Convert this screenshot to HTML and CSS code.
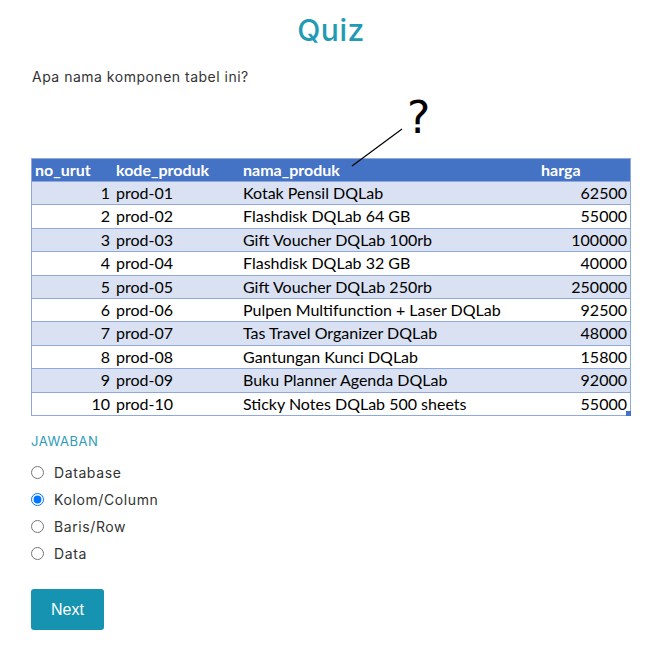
FILE: index.html
```html
<!DOCTYPE html>
<html>
<head>
<meta charset="utf-8">
<link rel="stylesheet" href="styles.css">
</head>
<body>
<div class="page">
  <h1 class="title">Quiz</h1>
  <p class="question">Apa nama komponen tabel ini?</p>
  <div class="figure">
    <div class="annot">
      <span class="qmark">?</span>
      <svg class="pointer" width="600" height="80" viewBox="0 0 600 80">
        <line x1="321" y1="72" x2="371" y2="35" stroke="#000" stroke-width="1.2"/>
      </svg>
    </div>
    <table class="data">
      <thead>
        <tr><th class="c1">no_urut</th><th class="c2">kode_produk</th><th class="c3">nama_produk</th><th class="c4">harga</th></tr>
      </thead>
      <tbody>
        <tr class="band"><td class="c1">1</td><td class="c2">prod-01</td><td class="c3">Kotak Pensil DQLab</td><td class="c4">62500</td></tr>
        <tr><td class="c1">2</td><td class="c2">prod-02</td><td class="c3">Flashdisk DQLab 64 GB</td><td class="c4">55000</td></tr>
        <tr class="band"><td class="c1">3</td><td class="c2">prod-03</td><td class="c3">Gift Voucher DQLab 100rb</td><td class="c4">100000</td></tr>
        <tr><td class="c1">4</td><td class="c2">prod-04</td><td class="c3">Flashdisk DQLab 32 GB</td><td class="c4">40000</td></tr>
        <tr class="band"><td class="c1">5</td><td class="c2">prod-05</td><td class="c3">Gift Voucher DQLab 250rb</td><td class="c4">250000</td></tr>
        <tr><td class="c1">6</td><td class="c2">prod-06</td><td class="c3">Pulpen Multifunction + Laser DQLab</td><td class="c4">92500</td></tr>
        <tr class="band"><td class="c1">7</td><td class="c2">prod-07</td><td class="c3">Tas Travel Organizer DQLab</td><td class="c4">48000</td></tr>
        <tr><td class="c1">8</td><td class="c2">prod-08</td><td class="c3">Gantungan Kunci DQLab</td><td class="c4">15800</td></tr>
        <tr class="band"><td class="c1">9</td><td class="c2">prod-09</td><td class="c3">Buku Planner Agenda DQLab</td><td class="c4">92000</td></tr>
        <tr><td class="c1">10</td><td class="c2">prod-10</td><td class="c3">Sticky Notes DQLab 500 sheets</td><td class="c4">55000<span class="handle"></span></td></tr>
      </tbody>
    </table>
  </div>
  <div class="answers">
    <div class="label">JAWABAN</div>
    <label class="opt"><input type="radio" name="a"><span>Database</span></label>
    <label class="opt"><input type="radio" name="a" checked><span>Kolom/Column</span></label>
    <label class="opt"><input type="radio" name="a"><span>Baris/Row</span></label>
    <label class="opt"><input type="radio" name="a"><span>Data</span></label>
  </div>
  <button class="next">Next</button>
</div>
</body>
</html>
```
FILE: styles.css
```css
html, body {
  margin: 0;
  padding: 0;
  background: #fff;
}
body {
  font-family: Inter, "Open Sans", sans-serif;
  color: #333;
}
.page {
  padding: 0 41px 0 31px;
}
.title {
  margin: 0;
  padding-top: 10px;
  text-align: center;
  font-size: 30px;
  font-weight: 500;
  letter-spacing: 0.5px;
  color: #1f9bb3;
  line-height: 40px;
}
.question {
  margin: 18px 0 0 1px;
  font-size: 14px;
  letter-spacing: 0.5px;
  line-height: 18px;
  color: #333;
}
.figure {
  position: relative;
  margin-top: 8px;
}
.annot {
  height: 64px;
}
.qmark {
  position: absolute;
  left: 376px;
  top: -4px;
  font-family: "DejaVu Sans", sans-serif;
  font-size: 44px;
  line-height: 56px;
  color: #000;
}
.pointer {
  position: absolute;
  left: 0;
  top: 0;
  z-index: 2;
}
.data {
  width: 600px;
  border-collapse: collapse;
  font-family: Lato, "Open Sans", sans-serif;
  font-size: 16px;
  color: #000;
  border: 1px solid #8ea9db;
}
.data th, .data td {
  padding: 0 3px 0 3px;
  white-space: nowrap;
}
.data th {
  height: 22px;
  line-height: 22px;
  background: #4472c4;
  color: #fff;
  font-weight: 700;
  text-align: left;
}
.data td {
  height: 22.4px;
  line-height: 22.4px;
  border-top: 1px solid #8ea9db;
}
.data tr.band td {
  background: #d9e1f2;
}
.data .c1 { width: 75px; }
.data .c2 { width: 119px; padding-left: 3px; }
.data .c3 { width: 292px; padding-left: 5px; }
.data .c4 { text-align: right; }
.data th.c1, .data th.c4 { text-align: left; }
.data td.c1 { text-align: right; }
.data td.c4 { position: relative; }
.handle {
  position: absolute;
  right: -1px;
  bottom: -1px;
  width: 5px;
  height: 5px;
  background: #4472c4;
}
.answers {
  margin-top: 17px;
}
.label {
  font-size: 13px;
  letter-spacing: 0.5px;
  color: #2d9cb8;
  line-height: 16px;
  margin-bottom: 10px;
}
.opt {
  display: flex;
  align-items: center;
  height: 27px;
  font-size: 14px;
  letter-spacing: 0.6px;
  color: #333;
}
.opt input {
  margin: 0 10px 0 0;
  width: 13px;
  height: 13px;
}
.next {
  margin-top: 22px;
  width: 73px;
  height: 41px;
  border: none;
  border-radius: 3px;
  background: #1593b1;
  color: #fff;
  font-family: "Liberation Sans", Arial, sans-serif;
  font-size: 16px;
  padding: 0;
}
```
